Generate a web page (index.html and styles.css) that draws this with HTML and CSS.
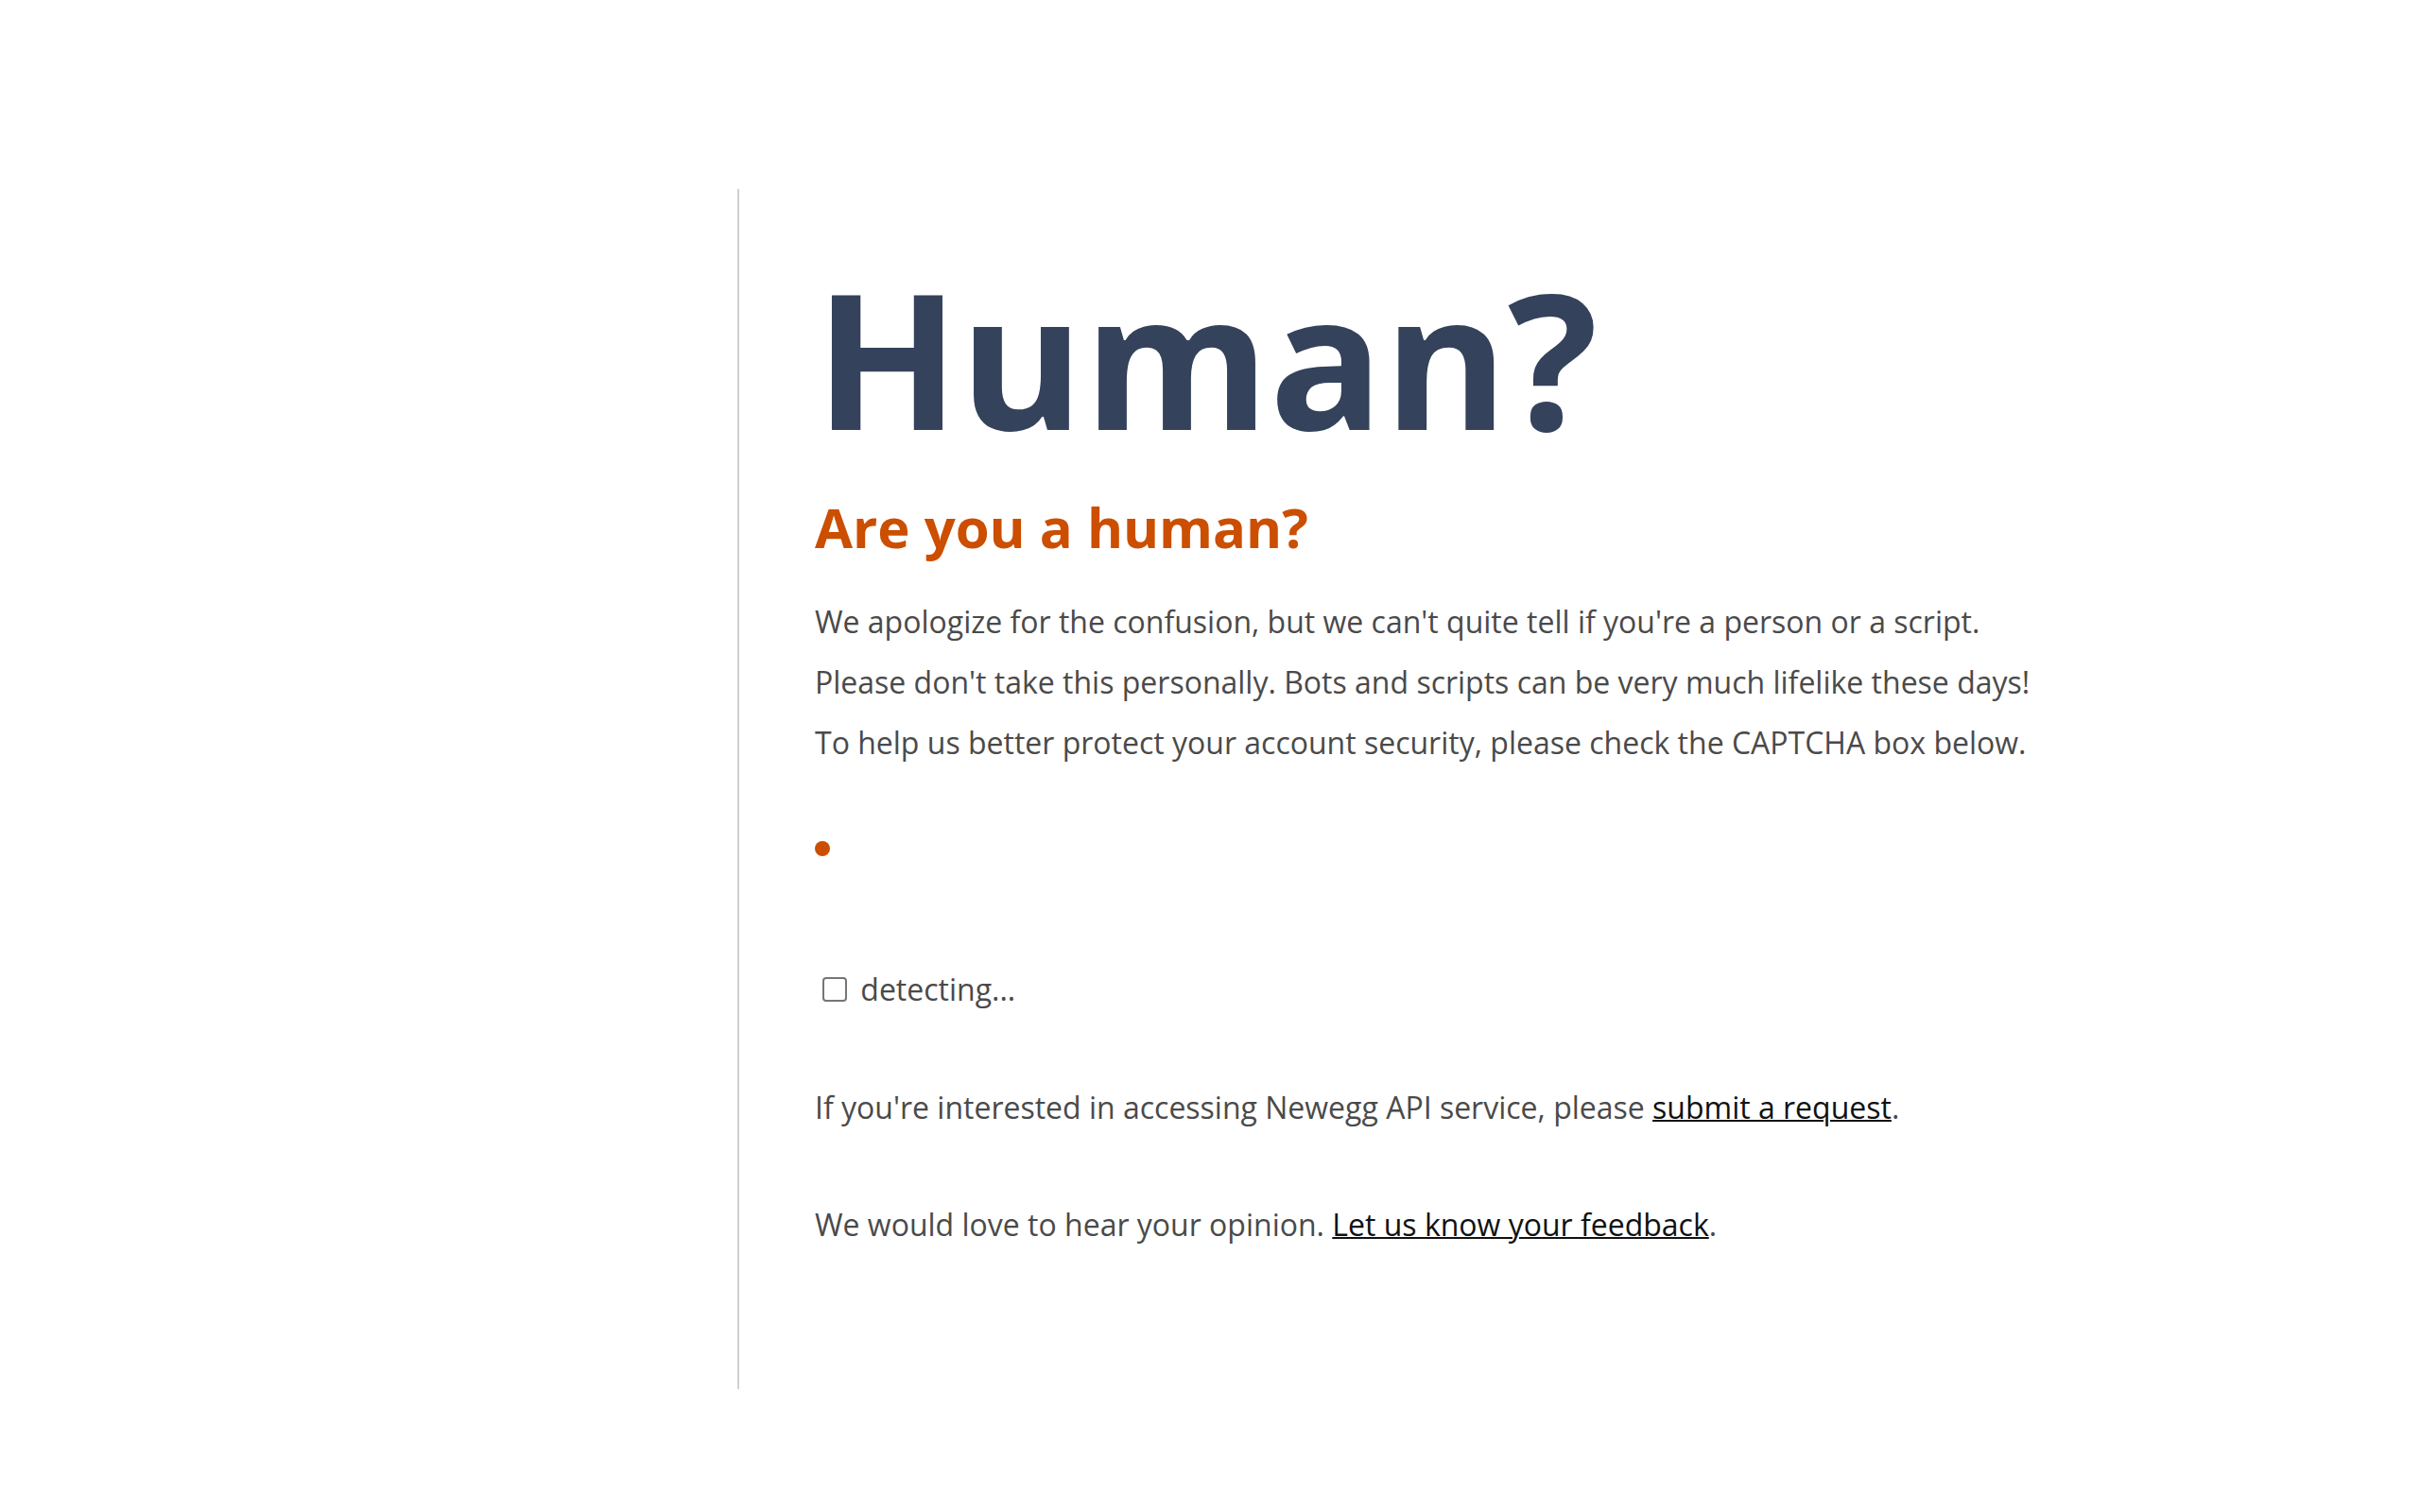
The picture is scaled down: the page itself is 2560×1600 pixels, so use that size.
FILE: index.html
```html
<!DOCTYPE html>
<html lang="en">
<head>
<meta charset="UTF-8">
<meta name="viewport" content="width=device-width, initial-scale=1.0">
<title>Are you a human?</title>
<link rel="stylesheet" href="styles.css">
</head>
<body>

<div class="page">
    <div class="content">
        <h1>Human?</h1>
        <h2>Are you a human?</h2>
        <div class="intro">
            <p>We apologize for the confusion, but we can't quite tell if you're a person or a script.</p>
            <p>Please don't take this personally. Bots and scripts can be very much lifelike these days!</p>
            <p>To help us better protect your account security, please check the CAPTCHA box below.</p>
        </div>
        <div class="loader"><span class="loader-dot"></span></div>
        <div class="check-row">
            <input type="checkbox" id="humanCheck"> <label for="humanCheck">detecting...</label>
        </div>
        <p class="note">If you're interested in accessing Newegg API service, please <a href="#">submit a request</a>.</p>
        <p class="note">We would love to hear your opinion. <a href="#">Let us know your feedback</a>.</p>
    </div>
</div>

</body>
</html>
```

FILE: styles.css
```css
body {
    margin: 0;
    font-family: "Open Sans", Arial, sans-serif;
    color: #4a4a4a;
    background: #fff;
}
.page {
    padding: 200px 0 0 780px;
}
.content {
    border-left: 2px solid #d0d0d0;
    padding: 58px 0 142px 80px;
}
h1 {
    margin: 0;
    font-size: 200px;
    line-height: 240px;
    font-weight: 700;
    color: #34425b;
}
h2 {
    margin: 24px 0 0;
    font-size: 58px;
    line-height: 72px;
    font-weight: 700;
    color: #cc4e00;
}
.intro {
    margin-top: 32px;
}
.intro p,
.note {
    margin: 0;
    font-size: 32px;
    line-height: 64px;
}
.loader {
    padding: 72px 0 109px;
}
.loader-dot {
    display: block;
    width: 16px;
    height: 16px;
    border-radius: 50%;
    background: #cc4e00;
}
.check-row {
    font-size: 32px;
    line-height: 64px;
}
/* drawn by hand so the box keeps a 2px border at this size */
.check-row input {
    appearance: none;
    -webkit-appearance: none;
    box-sizing: border-box;
    width: 26px;
    height: 26px;
    margin: 0 6px 0 8px;
    border: 2px solid #767676;
    border-radius: 4px;
    background: #fff;
    vertical-align: -1px;
}
.note {
    margin-top: 61px;
}
.note + .note {
    margin-top: 60px;
}
.note a {
    color: #111;
    text-decoration-thickness: 2px;
}
```
